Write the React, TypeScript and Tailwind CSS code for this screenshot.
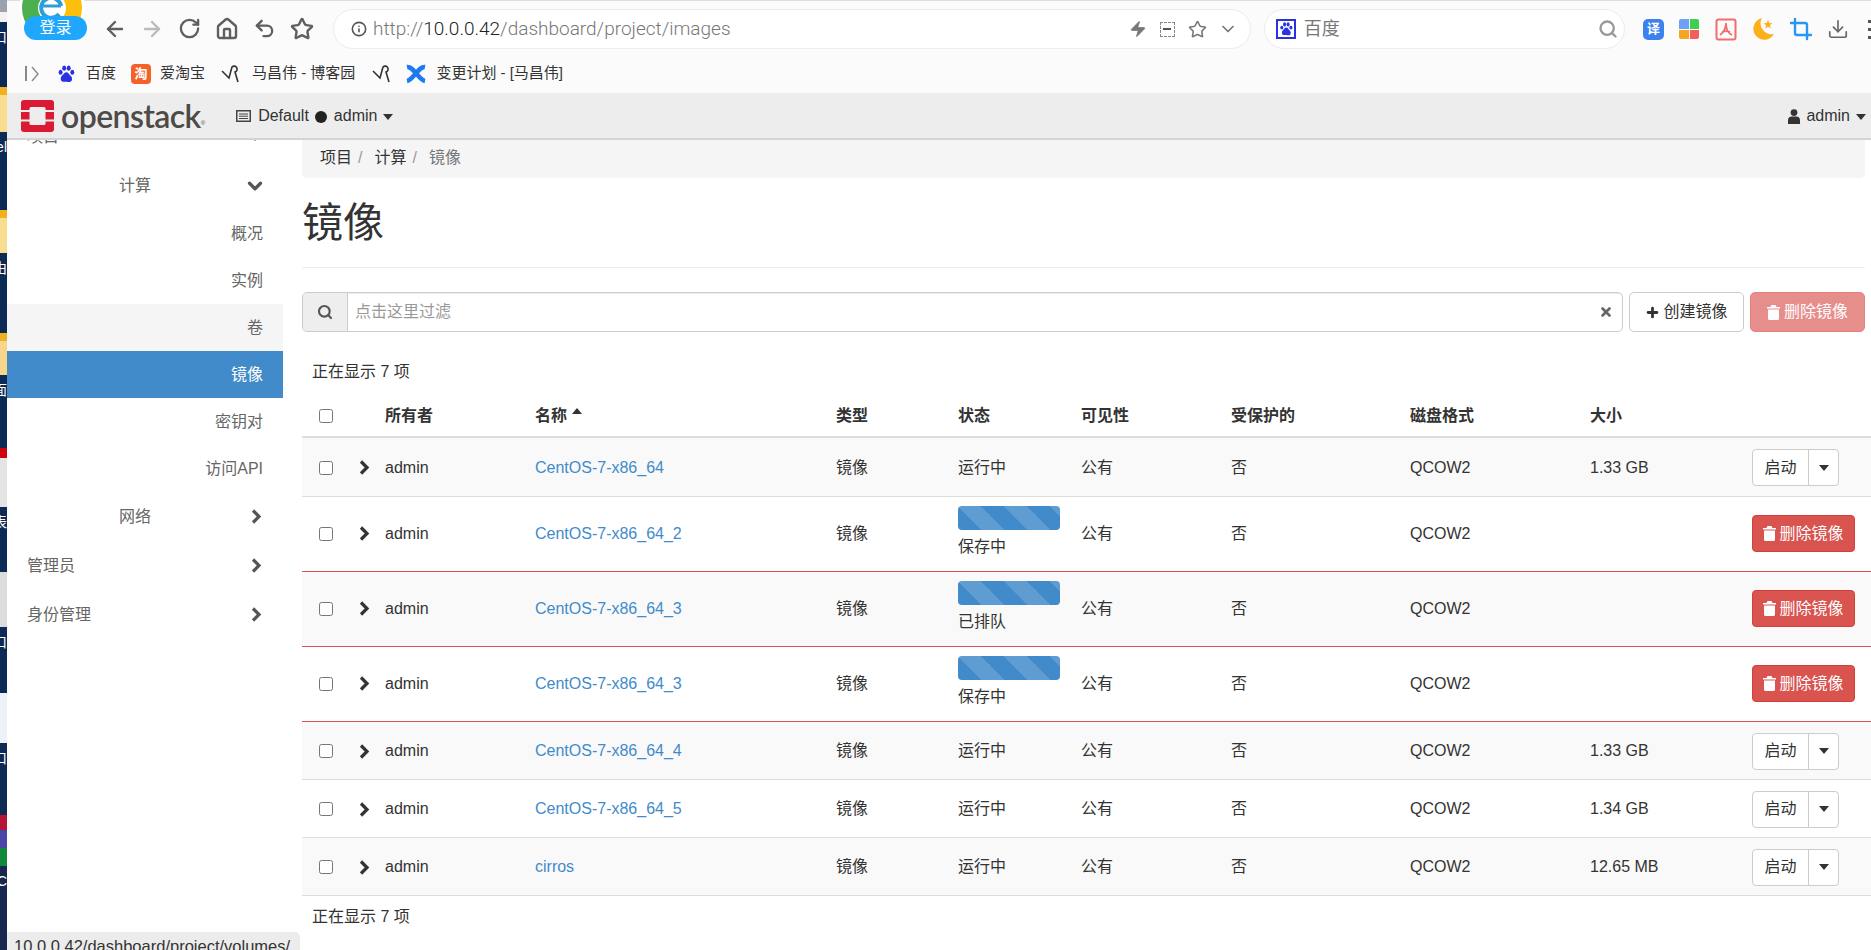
import { ArrowLeft, ArrowRight, ChevronDown, Crop, Download, Home, Info, Plus, RotateCw, Search, Star, Undo2, X, Zap } from "lucide-react";

const desktopStrip = [
  { id: 1, cls: "h-[12px] bg-[#9aa3ad]", text: "" },
  { id: 2, cls: "h-[10px] bg-[#f2f2f2]", text: "" },
  { id: 3, cls: "h-[65px] bg-[#0b2a55]", text: "口" },
  { id: 4, cls: "h-[6px] bg-[#f0b020]", text: "" },
  { id: 5, cls: "h-[37px] bg-[#f8dc90]", text: "" },
  { id: 6, cls: "h-[79px] bg-[#0b2a55]", text: "el" },
  { id: 7, cls: "h-[6px] bg-[#f0b020]", text: "" },
  { id: 8, cls: "h-[35px] bg-[#f8dc90]", text: "" },
  { id: 9, cls: "h-[80px] bg-[#0b2a55]", text: "由" },
  { id: 10, cls: "h-[8px] bg-[#f0b020]", text: "" },
  { id: 11, cls: "h-[34px] bg-[#f5d68a]", text: "" },
  { id: 12, cls: "h-[73px] bg-[#0b2a55]", text: "面" },
  { id: 13, cls: "h-[10px] bg-[#d00010]", text: "" },
  { id: 14, cls: "h-[50px] bg-[#e4e4e4]", text: "" },
  { id: 15, cls: "h-[65px] bg-[#0b2a55]", text: "表" },
  { id: 16, cls: "h-[55px] bg-[#dcdcdc]", text: "" },
  { id: 17, cls: "h-[66px] bg-[#0b2a55]", text: "口" },
  { id: 18, cls: "h-[50px] bg-[#eef1f8]", text: "" },
  { id: 19, cls: "h-[73px] bg-[#0e2a55]", text: "口" },
  { id: 20, cls: "h-[15px] bg-[#b51535]", text: "" },
  { id: 21, cls: "h-[18px] bg-[#4a44a8]", text: "" },
  { id: 22, cls: "h-[18px] bg-[#0f8a3a]", text: "" },
  { id: 23, cls: "h-[84px] bg-[#17274f]", text: "C" },
];

const subMenu = [
  { id: 1, label: "概况", cls: "text-[#666]" },
  { id: 2, label: "实例", cls: "text-[#666]" },
  { id: 3, label: "卷", cls: "text-[#666] bg-[#f5f5f5]" },
  { id: 4, label: "镜像", cls: "text-white bg-[#428bca]" },
  { id: 5, label: "密钥对", cls: "text-[#666]" },
  { id: 6, label: "访问API", cls: "text-[#666]" },
];

const images = [
  { id: 1, name: "CentOS-7-x86_64", status: "运行中", size: "1.33 GB", busy: false, rowCls: "h-[59px] bg-[#f9f9f9] border-b border-[#ddd] [&>td]:pt-[2px]" },
  { id: 2, name: "CentOS-7-x86_64_2", status: "保存中", size: "", busy: true, rowCls: "h-[75px] bg-white border-b border-[#d9534f]" },
  { id: 3, name: "CentOS-7-x86_64_3", status: "已排队", size: "", busy: true, rowCls: "h-[75px] bg-[#f9f9f9] border-b border-[#d9534f]" },
  { id: 4, name: "CentOS-7-x86_64_3", status: "保存中", size: "", busy: true, rowCls: "h-[75px] bg-white border-b border-[#d9534f]" },
  { id: 5, name: "CentOS-7-x86_64_4", status: "运行中", size: "1.33 GB", busy: false, rowCls: "h-[58px] bg-[#f9f9f9] border-b border-[#ddd] [&>td]:pt-[2px]" },
  { id: 6, name: "CentOS-7-x86_64_5", status: "运行中", size: "1.34 GB", busy: false, rowCls: "h-[58px] bg-white border-b border-[#ddd] [&>td]:pt-[2px]" },
  { id: 7, name: "cirros", status: "运行中", size: "12.65 MB", busy: false, rowCls: "h-[58px] bg-[#f9f9f9] border-b border-[#ddd] [&>td]:pt-[2px]" },
];

function ChevronRightIcon({ color = "#333" }: { color?: string }) {
  return (
    <svg width="11" height="15" viewBox="0 0 11 15" fill="none" stroke={color} strokeWidth="3.2">
      <path d="M2 1.5l6 6-6 6" />
    </svg>
  );
}

function Caret({ up = false }: { up?: boolean }) {
  return (
    <svg width="10" height="6" viewBox="0 0 10 6" fill="currentColor" className="inline-block">
      <path d={up ? "M0 6l5-6 5 6z" : "M0 0l5 6 5-6z"} />
    </svg>
  );
}

function TrashIcon() {
  return (
    <svg width="13" height="15" viewBox="0 0 13 15" fill="currentColor" className="shrink-0">
      <path d="M4.5 0h4l1 2H13v1.5H0V2h3.5zM1 4.5h11V13.5a1.5 1.5 0 0 1-1.5 1.5h-8A1.5 1.5 0 0 1 1 13.5z" />
    </svg>
  );
}

function PawIcon({ size = 18, color = "#2932e1" }: { size?: number; color?: string }) {
  return (
    <svg width={size} height={size} viewBox="0 0 20 20" fill={color}>
      <ellipse cx="4" cy="8" rx="2.2" ry="2.8" />
      <ellipse cx="8" cy="3.5" rx="2.2" ry="3" />
      <ellipse cx="13" cy="3.5" rx="2.2" ry="3" />
      <ellipse cx="17" cy="8" rx="2.2" ry="2.8" />
      <path d="M10.5 8c-2 0-3 2-4.500 3.500S3.500 14.500 4.500 17s4 1.500 6 1.500 5 1.500 6-1.500-.5-4-2-5.500S12.500 8 10.500 8z" />
    </svg>
  );
}

function BlogIcon() {
  return (
    <svg width="19" height="19" viewBox="0 0 19 19" fill="none" stroke="#333" strokeWidth="1.6">
      <path d="M1 7l7 7 3-11a3 3 0 1 1 3 5l3 10" />
    </svg>
  );
}

function ToolbarLeft() {
  return (
    <div className="flex pl-[89px] text-[#5f5f5f]">
      <div className="flex w-[37.500px] justify-center"><ArrowLeft size={24} strokeWidth={2.4} /></div>
      <div className="flex w-[37.500px] justify-center text-[#bbb]"><ArrowRight size={24} strokeWidth={2.4} /></div>
      <div className="flex w-[37.500px] justify-center"><RotateCw size={23} strokeWidth={2.4} /></div>
      <div className="flex w-[37.500px] justify-center"><Home size={24} strokeWidth={2.4} /></div>
      <div className="flex w-[37.500px] justify-center"><Undo2 size={23} strokeWidth={2.4} /></div>
      <div className="flex w-[37.500px] justify-center"><Star size={24} strokeWidth={2.4} /></div>
    </div>
  );
}

function ExtensionIcons() {
  return (
    <div className="ml-[18px] flex items-center">
      <div className="flex h-[21px] w-[21px] items-center justify-center rounded-[5px] bg-[#3b82f0] text-[13px] font-bold text-white">译</div>
      <div className="ml-[15px] grid h-[20px] w-[20px] grid-cols-2 gap-[1px]">
        <div className="rounded-tl-[2px] bg-[#6ea0f5]" />
        <div className="rounded-tr-[2px] bg-[#3fcf4f]" />
        <div className="rounded-bl-[2px] bg-[#f5a623]" />
        <div className="rounded-br-[2px] bg-[#f55d5d]" />
      </div>
      <svg className="ml-[16px]" width="22" height="23" viewBox="0 0 22 23" fill="none" stroke="#f36c6c" strokeWidth="2">
        <rect x="1.500" y="1.500" width="19" height="20" rx="2" />
        <path d="M11 5c0 5-2 9-6 12M11 6c0 5 2 9 6 11M7 14c3-1 6-1 8 0" strokeWidth="1.800" />
      </svg>
      <svg className="ml-[14px]" width="24" height="24" viewBox="0 0 24 24">
        <path d="M11 1a11 11 0 1 0 12 16A11 11 0 0 1 11 1z" fill="#fdb019" />
        <path d="M17 3l1.300 3 3 .3-2.300 2 .7 3-2.700-1.600-2.700 1.600.7-3-2.300-2 3-.3z" fill="#fdb019" />
      </svg>
      <Crop className="ml-[14px] text-[#2b95f5]" size={24} strokeWidth={2.4} />
      <Download className="ml-[14px] text-[#666]" size={22} strokeWidth={1.8} />
      <div className="ml-[19px] flex flex-col gap-[5px]">
        <div className="h-[3px] w-[3px] bg-[#555]" />
        <div className="h-[3px] w-[3px] bg-[#555]" />
        <div className="h-[3px] w-[3px] bg-[#555]" />
      </div>
    </div>
  );
}

function Toolbar() {
  return (
    <div className="flex h-[56px] shrink-0 items-center border-t border-[#dedede] bg-[#fbfbfb] pt-[1px]">
      <ToolbarLeft />
      <div className="ml-[12px] flex h-[40px] w-[920px] items-center rounded-full border border-[#ececec] bg-white pl-[17px] pr-[12px]">
        <Info size={16} className="text-[#555]" strokeWidth={2.4} />
        <span className="ml-[6px] font-['Roboto',sans-serif] text-[19px] font-light text-[#777]">
          http://<span className="text-[#222]">10.0.0.42</span>/dashboard/project/images
        </span>
        <div className="ml-auto flex items-center text-[#777]">
          <Zap size={18} fill="#777" strokeWidth={1} />
          <div className="ml-[13px] flex h-[15px] w-[15px] items-center justify-center border border-dashed border-[#888]">
            <div className="h-[2px] w-[8px] bg-[#555]" />
          </div>
          <Star className="ml-[13px]" size={19} strokeWidth={2} />
          <ChevronDown className="ml-[11px]" size={20} strokeWidth={2} />
        </div>
      </div>
      <div className="ml-[13px] flex h-[40px] w-[362px] items-center rounded-full border border-[#ececec] bg-white pl-[11px] pr-[6px]">
        <div className="flex h-[20px] w-[20px] items-center justify-center border-2 border-[#2932e1]">
          <PawIcon size={14} />
        </div>
        <span className="ml-[8px] text-[18px] text-[#777]">百度</span>
        <Search className="ml-auto text-[#999]" size={20} strokeWidth={2.8} />
      </div>
      <ExtensionIcons />
    </div>
  );
}

function Bookmarks() {
  return (
    <div className="flex h-[37px] shrink-0 items-center bg-[#fbfbfb] pb-[2px] pl-[18px] text-[15px] text-[#333]">
      <div className="h-[15px] w-[2px] bg-[#888]" />
      <svg className="ml-[4px]" width="9" height="16" viewBox="0 0 9 16" fill="none" stroke="#888" strokeWidth="1.400">
        <path d="M1 1l6 7-6 7" />
      </svg>
      <div className="ml-[17px]"><PawIcon size={18} /></div>
      <span className="ml-[11px]">百度</span>
      <div className="ml-[15px] flex h-[20px] w-[20px] items-center justify-center rounded-[4px] bg-[#f4622a] text-[13px] font-bold leading-none text-white">淘</div>
      <span className="ml-[9px]">爱淘宝</span>
      <div className="ml-[16px]"><BlogIcon /></div>
      <span className="ml-[12px]">马昌伟 - 博客园</span>
      <div className="ml-[17px]"><BlogIcon /></div>
      <svg className="ml-[15px]" width="20" height="20" viewBox="0 0 20 20" fill="none" stroke="#1f7af0" strokeWidth="4.600">
        <path d="M1 3c6-1 12 13 18 14M19 3C13 2 7 16 1 17" />
      </svg>
      <span className="ml-[10px]">变更计划 - [马昌伟]</span>
    </div>
  );
}

function Navbar() {
  return (
    <div className="flex h-[47px] shrink-0 items-center border-b-2 border-[#d4d4d4] bg-[#ededed] pt-[1px] text-[16px] text-[#333]">
      <svg className="ml-[14px] shrink-0" width="33" height="32" viewBox="0 0 33 32">
        <rect width="33" height="32" rx="3" fill="#da1a32" />
        <rect x="8.500" y="7" width="16" height="18" rx="1.500" fill="#ededed" />
        <path d="M0 11h9M0 20.500h9M24 11h9M24 20.500h9" stroke="#ededed" strokeWidth="1.800" />
      </svg>
      <span className="ml-[7px] font-['Lato',sans-serif] text-[32px] font-semibold leading-none tracking-[-0.6px] text-[#4d4a47]">openstack</span>
      <span className="mt-[14px] text-[6px] text-[#4d4a47]">®</span>
      <svg className="ml-[31px]" width="15" height="12" viewBox="0 0 15 12" fill="none" stroke="#444" strokeWidth="1.500">
        <rect x=".75" y=".75" width="13.500" height="10.500" />
        <path d="M3 4h9M3 6.200h9M3 8.500h9" strokeWidth="1" />
      </svg>
      <span className="ml-[7px]">Default</span>
      <span className="ml-[6px] mt-[2px] h-[12px] w-[12px] rounded-full bg-[#222]" />
      <span className="ml-[7px]">admin</span>
      <span className="ml-[6px] text-[#333]"><Caret /></span>
      <svg className="ml-auto" width="12" height="15" viewBox="0 0 12 15" fill="#333">
        <circle cx="6" cy="3.600" r="3.400" />
        <path d="M0 15v-4c0-2.500 2-3.500 3.500-3.500h5c1.500 0 3.500 1 3.500 3.500v4z" />
      </svg>
      <span className="ml-[6px]">admin</span>
      <span className="ml-[6px] mr-[5px]"><Caret /></span>
    </div>
  );
}

function Sidebar() {
  return (
    <div className="w-[276px] shrink-0 overflow-hidden bg-white text-[16px] text-[#666]">
      <div className="-mt-[28px] flex h-[49px] items-center justify-between pl-[20px] pr-[19px]">
        <span>项目</span>
        <ChevronDown size={18} strokeWidth={3.5} className="text-[#555]" />
      </div>
      <div className="flex h-[49px] items-center justify-between pl-[112px] pr-[17px]">
        <span>计算</span>
        <ChevronDown size={22} strokeWidth={3.5} className="text-[#555]" />
      </div>
      {subMenu.map((item) => (
        <div key={item.id} className={`flex h-[47px] items-center justify-end pr-[20px] ${item.cls}`}>
          {item.label}
        </div>
      ))}
      <div className="flex h-[49px] items-center justify-between pl-[112px] pr-[21px]">
        <span>网络</span>
        <ChevronRightIcon color="#555" />
      </div>
      <div className="flex h-[49px] items-center justify-between pl-[20px] pr-[21px]">
        <span>管理员</span>
        <ChevronRightIcon color="#555" />
      </div>
      <div className="flex h-[49px] items-center justify-between pl-[20px] pr-[21px]">
        <span>身份管理</span>
        <ChevronRightIcon color="#555" />
      </div>
    </div>
  );
}

function FilterBar() {
  return (
    <div className="mt-[24px] flex h-[40px] gap-[6px]">
      <div className="flex min-w-0 flex-1 rounded-[5px] border border-[#ccc] shadow-[inset_0_1px_1px_rgba(0,0,0,0.075)]">
        <div className="flex w-[45px] shrink-0 items-center justify-center rounded-l-[5px] border-r border-[#ccc] bg-[#eee] text-[#555]">
          <Search size={16} strokeWidth={3.2} />
        </div>
        <div className="flex flex-1 items-center justify-between pl-[7px] pr-[9px] text-[#999]">
          <span>点击这里过滤</span>
          <X size={14} strokeWidth={4.5} className="text-[#666]" />
        </div>
      </div>
      <button className="flex w-[115px] shrink-0 items-center justify-center gap-[3px] rounded-[5px] border border-[#ccc] bg-white text-[#333]">
        <Plus size={15} strokeWidth={4.5} />
        创建镜像
      </button>
      <button className="flex w-[115px] shrink-0 items-center justify-center gap-[4px] rounded-[5px] border border-[#d43f3a] bg-[#d9534f] text-white opacity-65">
        <TrashIcon />
        删除镜像
      </button>
    </div>
  );
}

function ImageTable() {
  return (
    <table className="mt-[12px] w-[calc(100%+6px)] table-fixed border-collapse text-left text-[16px] text-[#333]">
      <colgroup>
        <col className="w-[55px]" />
        <col className="w-[20px]" />
        <col className="w-[150px]" />
        <col className="w-[301px]" />
        <col className="w-[122px]" />
        <col className="w-[123px]" />
        <col className="w-[150px]" />
        <col className="w-[179px]" />
        <col className="w-[180px]" />
        <col className="w-[150px]" />
        <col />
      </colgroup>
      <thead>
        <tr className="h-[41px] border-b-2 border-[#ddd]">
          <th className="pl-[17px] font-normal"><input type="checkbox" className="block h-[14px] w-[14px]" /></th>
          <th />
          <th className="px-[8px] font-bold">所有者</th>
          <th className="px-[8px] font-bold">名称 <span className="relative -top-[6px] ml-[1px]"><Caret up /></span></th>
          <th className="px-[8px] font-bold">类型</th>
          <th className="px-[8px] font-bold">状态</th>
          <th className="px-[8px] font-bold">可见性</th>
          <th className="px-[8px] font-bold">受保护的</th>
          <th className="px-[8px] font-bold">磁盘格式</th>
          <th className="px-[8px] font-bold">大小</th>
          <th />
        </tr>
      </thead>
      <tbody>
        {images.map((image) => (
          <tr key={image.id} className={image.rowCls}>
            <td className="pl-[17px]"><input type="checkbox" className="block h-[14px] w-[14px]" /></td>
            <td className="pl-[2px]"><ChevronRightIcon /></td>
            <td className="px-[8px]">admin</td>
            <td className="px-[8px] text-[#428bca]">{image.name}</td>
            <td className="px-[8px]">镜像</td>
            <td className="px-[8px]">
              {image.busy && (
                <div className="-mt-[2px] mb-[5px] h-[24px] w-[102px] rounded-[4px] bg-[#428bca] bg-[linear-gradient(45deg,rgba(255,255,255,0.15)_25%,transparent_25%,transparent_50%,rgba(255,255,255,0.15)_50%,rgba(255,255,255,0.15)_75%,transparent_75%,transparent)] bg-[length:46px_46px]" />
              )}
              {image.status}
            </td>
            <td className="px-[8px]">公有</td>
            <td className="px-[8px]">否</td>
            <td className="px-[8px]">QCOW2</td>
            <td className="px-[8px]">{image.size}</td>
            <td className="pl-[20px]">
              {image.busy ? (
                <button className="flex h-[37px] w-[103px] items-center justify-center gap-[3px] rounded-[4px] border border-[#d43f3a] bg-[#d9534f] text-white">
                  <TrashIcon />
                  删除镜像
                </button>
              ) : (
                <div className="flex h-[37px] w-[87px] rounded-[4px] border border-[#ccc] bg-white">
                  <span className="flex w-[56px] items-center justify-center border-r border-[#ccc]">启动</span>
                  <span className="flex flex-1 items-center justify-center"><Caret /></span>
                </div>
              )}
            </td>
          </tr>
        ))}
      </tbody>
    </table>
  );
}

function Content() {
  return (
    <div className="min-w-0 flex-1 bg-white pl-[19px] pr-[6px] text-[16px] text-[#333]">
      <div className="flex h-[38px] items-center rounded-b-[5px] bg-[#f5f5f5] pb-[3px] pl-[18px]">
        <span>项目</span>
        <span className="ml-[6px] text-[#999]">/</span>
        <span className="ml-[12px]">计算</span>
        <span className="ml-[6px] text-[#999]">/</span>
        <span className="ml-[12px] text-[#777]">镜像</span>
      </div>
      <div className="mt-[20px] h-[50px] text-[41px] leading-[50px]">镜像</div>
      <div className="mt-[19px] border-t border-[#eee]" />
      <FilterBar />
      <div className="mt-[28px] pl-[10px] leading-[24px]">正在显示 7 项</div>
      <ImageTable />
      <div className="mt-[9px] pl-[10px] leading-[24px]">正在显示 7 项</div>
    </div>
  );
}

export default function App() {
  return (
    <div className="relative flex h-[950px] w-[1871px] overflow-hidden bg-white font-['Liberation_Sans','Noto_Sans_CJK_SC',sans-serif]">
      {/* Desktop peeking out behind the browser */}
      <div className="flex w-[7px] shrink-0 flex-col">
        {desktopStrip.map((block) => (
          <div key={block.id} className={`flex justify-end overflow-hidden whitespace-nowrap pt-[8px] text-[14px] leading-none text-white ${block.cls}`}>
            {block.text}
          </div>
        ))}
      </div>

      <div className="flex min-w-0 flex-1 flex-col">
        <Toolbar />
        <Bookmarks />
        <Navbar />
        <div className="flex min-h-0 flex-1">
          <Sidebar />
          <Content />
        </div>
      </div>

      {/* Login badge over the toolbar corner */}
      <svg className="absolute left-[18px] top-0" width="72" height="44" viewBox="0 0 72 44" fill="none">
        <circle cx="34" cy="8" r="33" fill="#fff" />
        <path d="M34 -14A22 22 0 0 0 34 30" stroke="#4caf50" strokeWidth="16" />
        <path d="M34 -14A22 22 0 0 1 34 30" stroke="#fcc00c" strokeWidth="16" />
        <path d="M43 6A10 10 0 1 0 41 14" stroke="#2a9fd8" strokeWidth="4" />
        <path d="M25 6h18" stroke="#2a9fd8" strokeWidth="3" />
      </svg>
      <div className="absolute left-[24px] top-[16px] flex h-[24px] w-[63px] items-center justify-center rounded-full bg-[#1ea7fd] text-[16px] text-white">登录</div>

      {/* Link status bubble */}
      <div className="absolute bottom-0 left-[7px] h-[18px] w-[293px] overflow-hidden rounded-tr-[5px] bg-[#ececec] pl-[7px] pt-[5px] text-[16.500px] leading-[18px] whitespace-nowrap text-[#333]">
        10.0.0.42/dashboard/project/volumes/
      </div>
    </div>
  );
}
